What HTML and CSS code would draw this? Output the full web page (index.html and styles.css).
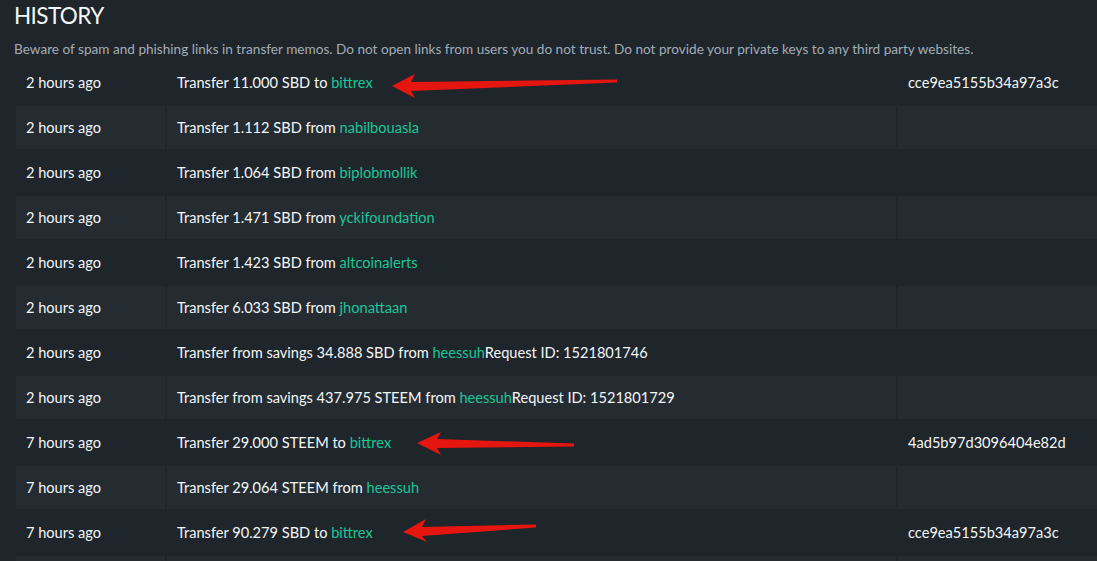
FILE: index.html
```html
<!DOCTYPE html>
<html>
<head>
<meta charset="utf-8">
<link rel="stylesheet" href="styles.css">
</head>
<body>
<div class="page">
  <h4 class="title">HISTORY</h4>
  <p class="warn">Beware of spam and phishing links in transfer memos. Do not open links from users you do not trust. Do not provide your private keys to any third party websites.</p>
  <table class="history">
    <colgroup><col class="c-time"><col class="c-desc"><col class="c-memo"></colgroup>
    <tbody>
      <tr><td>2 hours ago</td><td>Transfer 11.000 SBD to <a>bittrex</a></td><td>cce9ea5155b34a97a3c</td></tr>
      <tr><td>2 hours ago</td><td>Transfer 1.112 SBD from <a>nabilbouasla</a></td><td></td></tr>
      <tr><td>2 hours ago</td><td>Transfer 1.064 SBD from <a>biplobmollik</a></td><td></td></tr>
      <tr><td>2 hours ago</td><td>Transfer 1.471 SBD from <a>yckifoundation</a></td><td></td></tr>
      <tr><td>2 hours ago</td><td>Transfer 1.423 SBD from <a>altcoinalerts</a></td><td></td></tr>
      <tr><td>2 hours ago</td><td>Transfer 6.033 SBD from <a>jhonattaan</a></td><td></td></tr>
      <tr><td>2 hours ago</td><td>Transfer from savings 34.888 SBD from <a>heessuh</a>Request ID: 1521801746</td><td></td></tr>
      <tr><td>2 hours ago</td><td>Transfer from savings 437.975 STEEM from <a>heessuh</a>Request ID: 1521801729</td><td></td></tr>
      <tr><td>7 hours ago</td><td>Transfer 29.000 STEEM to <a>bittrex</a></td><td>4ad5b97d3096404e82d</td></tr>
      <tr><td>7 hours ago</td><td>Transfer 29.064 STEEM from <a>heessuh</a></td><td></td></tr>
      <tr><td>7 hours ago</td><td>Transfer 90.279 SBD to <a>bittrex</a></td><td>cce9ea5155b34a97a3c</td></tr>
      <tr><td></td><td></td><td></td></tr>
    </tbody>
  </table>
</div>
<svg class="arrows" width="1097" height="561" viewBox="0 0 1097 561">
  <polygon points="392,86 415,74 411,82 617,79.5 617,82.5 411,91 415,98" />
  <polygon points="417,443 441,432 437,439 574,443.5 574,446.5 437,448 441,455" />
  <polygon points="403,532 426,519 422,527 536,524.5 536,527.5 422,536 427,542" />
</svg>
</body>
</html>
```

FILE: styles.css
```css
html, body {
  margin: 0;
  padding: 0;
  background: #1e252b;
  overflow: hidden;
}
body {
  font-family: "Source Sans Pro", Lato, "Noto Sans", sans-serif;
  color: #f4f7f8;
  width: 1097px;
  height: 561px;
  position: relative;
}
.page {
  padding: 0 0 0 14px;
}
.title {
  margin: 0;
  padding-top: 3px;
  font-size: 22.5px;
  font-weight: 400;
  line-height: 26px;
  letter-spacing: -0.6px;
}
.warn {
  margin: 11px 0 0 0;
  font-size: 13.6px;
  line-height: 18px;
  color: #a3adb5;
}
.history {
  margin-top: 1px;
  margin-left: 0;
  border-collapse: separate;
  border-spacing: 2px;
  width: 1110px;
  table-layout: fixed;
  font-size: 14.6px;
}
.c-time { width: 149px; }
.c-desc { width: 729px; }
.c-memo { width: 228px; }
.history td {
  height: 43px;
  padding: 0 10px;
  box-sizing: border-box;
  white-space: nowrap;
  vertical-align: middle;
}
.history tr:nth-child(even) td {
  background: #242c32;
}
.history a {
  color: #1cc596;
  text-decoration: none;
}
.arrows {
  position: absolute;
  left: 0;
  top: 0;
  pointer-events: none;
}
.arrows polygon {
  fill: #e5150f;
}
```
